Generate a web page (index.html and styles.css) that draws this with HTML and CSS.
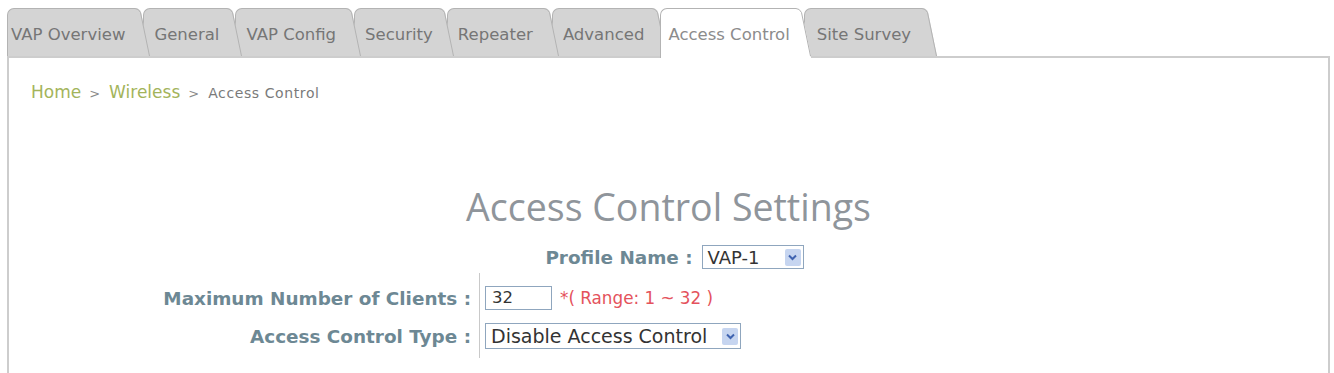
FILE: index.html
```html
<!DOCTYPE html>
<html lang="en">
<head>
<meta charset="utf-8">
<title>Access Control Settings</title>
<link rel="stylesheet" href="styles.css">
</head>
<body>
<div class="page">
  <nav class="tabs">
    <a class="tab tab-first"><span class="tab-label">VAP Overview</span><svg class="tab-slant" width="20" height="48" viewBox="0 0 20 48"><path class="slant-fill" d="M0 0 H5 Q9 0 11 4 L20 48 H0 Z"/><path class="slant-line" d="M0 0.5 H5 Q8.5 0.5 10.5 4.5 L19.5 48"/></svg></a>
    <a class="tab"><span class="tab-label">General</span><svg class="tab-slant" width="20" height="48" viewBox="0 0 20 48"><path class="slant-fill" d="M0 0 H5 Q9 0 11 4 L20 48 H0 Z"/><path class="slant-line" d="M0 0.5 H5 Q8.5 0.5 10.5 4.5 L19.5 48"/></svg></a>
    <a class="tab"><span class="tab-label">VAP Config</span><svg class="tab-slant" width="20" height="48" viewBox="0 0 20 48"><path class="slant-fill" d="M0 0 H5 Q9 0 11 4 L20 48 H0 Z"/><path class="slant-line" d="M0 0.5 H5 Q8.5 0.5 10.5 4.5 L19.5 48"/></svg></a>
    <a class="tab"><span class="tab-label">Security</span><svg class="tab-slant" width="20" height="48" viewBox="0 0 20 48"><path class="slant-fill" d="M0 0 H5 Q9 0 11 4 L20 48 H0 Z"/><path class="slant-line" d="M0 0.5 H5 Q8.5 0.5 10.5 4.5 L19.5 48"/></svg></a>
    <a class="tab"><span class="tab-label">Repeater</span><svg class="tab-slant" width="20" height="48" viewBox="0 0 20 48"><path class="slant-fill" d="M0 0 H5 Q9 0 11 4 L20 48 H0 Z"/><path class="slant-line" d="M0 0.5 H5 Q8.5 0.5 10.5 4.5 L19.5 48"/></svg></a>
    <a class="tab"><span class="tab-label">Advanced</span><svg class="tab-slant" width="20" height="48" viewBox="0 0 20 48"><path class="slant-fill" d="M0 0 H5 Q9 0 11 4 L20 48 H0 Z"/><path class="slant-line" d="M0 0.5 H5 Q8.5 0.5 10.5 4.5 L19.5 48"/></svg></a>
    <a class="tab tab-active"><span class="tab-label">Access Control</span><svg class="tab-slant" width="20" height="50" viewBox="0 0 20 50"><path class="slant-fill" d="M0 0 H5 Q9 0 11 4 L20 48 V50 H0 Z"/><path class="slant-line" d="M0 0.5 H5 Q8.5 0.5 10.5 4.5 L19.5 48 H20"/></svg></a>
    <a class="tab"><span class="tab-label">Site Survey</span><svg class="tab-slant" width="20" height="48" viewBox="0 0 20 48"><path class="slant-fill" d="M0 0 H5 Q9 0 11 4 L20 48 H0 Z"/><path class="slant-line" d="M0 0.5 H5 Q8.5 0.5 10.5 4.5 L19.5 48"/></svg></a>
  </nav>
  <main class="panel">
    <div class="breadcrumb">
      <a class="crumb-link">Home</a><span class="crumb-sep">&gt;</span><a class="crumb-link">Wireless</a><span class="crumb-sep">&gt;</span><span class="crumb-current">Access Control</span>
    </div>
    <h1 class="title">Access Control Settings</h1>
    <div class="profile-row">
      <span class="field-label">Profile Name :</span>
      <span class="select select-profile"><span class="select-value">VAP-1</span><span class="select-arrow"><svg width="9" height="7" viewBox="0 0 9 7"><path d="M1 1.5 L4.5 5 L8 1.5" fill="none" stroke="#3f63b0" stroke-width="2"/></svg></span></span>
    </div>
    <div class="form-grid">
      <div class="cell-label row-first"><span class="field-label">Maximum Number of Clients :</span></div>
      <div class="cell-field row-first">
        <span class="text-input">32</span>
        <span class="hint">*( Range: 1 ~ 32 )</span>
      </div>
      <div class="cell-label row-second"><span class="field-label">Access Control Type :</span></div>
      <div class="cell-field row-second">
        <span class="select select-type"><span class="select-value">Disable Access Control</span><span class="select-arrow"><svg width="9" height="7" viewBox="0 0 9 7"><path d="M1 1.5 L4.5 5 L8 1.5" fill="none" stroke="#3f63b0" stroke-width="2"/></svg></span></span>
      </div>
    </div>
  </main>
</div>
</body>
</html>
```

FILE: styles.css
```css
html, body {
  margin: 0;
  padding: 0;
  background: #ffffff;
}

.page {
  padding: 8px 4px 0 7px;
  font-family: "DejaVu Sans", Verdana, sans-serif;
}

/* ---------- tabs ---------- */
.tabs {
  display: flex;
  align-items: flex-start;
  height: 50px;
  margin-bottom: -2px;
  position: relative;
  z-index: 2;
}

.tab {
  display: flex;
  position: relative;
  margin-right: -7px;
  height: 48px;
  cursor: pointer;
}

.tab:nth-child(1) { z-index: 9; }
.tab:nth-child(2) { z-index: 8; }
.tab:nth-child(3) { z-index: 7; }
.tab:nth-child(4) { z-index: 6; }
.tab:nth-child(5) { z-index: 5; }
.tab:nth-child(6) { z-index: 4; }
.tab:nth-child(7) { z-index: 3; }
.tab:nth-child(8) { z-index: 2; }

.tab-label {
  display: block;
  height: 47px;
  line-height: 51px;
  padding: 0 3px 0 10px;
  background: #d4d4d4;
  border-top: 1px solid #b3b3b3;
  border-left: 1px solid #b3b3b3;
  border-top-left-radius: 7px;
  font-size: 16.5px;
  color: #767676;
  white-space: nowrap;
}

.tab:nth-child(1) .tab-label { padding-left: 3px; padding-right: 5px; }
.tab:nth-child(2) .tab-label { padding-right: 3px; }
.tab:nth-child(3) .tab-label { padding-right: 5px; }
.tab:nth-child(4) .tab-label { padding-right: 1px; }
.tab:nth-child(5) .tab-label { padding-right: 6px; }
.tab:nth-child(6) .tab-label { padding-right: 3px; }
.tab:nth-child(7) .tab-label { padding-left: 7px; padding-right: 1px; }
.tab:nth-child(8) .tab-label { padding-left: 12px; padding-right: 6px; }

.tab-slant {
  display: block;
  flex: none;
}

.slant-fill { fill: #d4d4d4; }
.slant-line { fill: none; stroke: #b3b3b3; stroke-width: 1; }

.tab.tab-active {
  z-index: 10;
  height: 50px;
}

.tab-active .tab-label {
  height: 49px;
  background: #ffffff;
  color: #8c8c8c;
}

.tab-active .slant-fill { fill: #ffffff; }

/* ---------- panel ---------- */
.panel {
  display: block;
  border: 2px solid #cdcdcd;
  border-bottom: none;
  min-height: 320px;
  position: relative;
  z-index: 1;
}

.breadcrumb {
  padding: 24px 0 0 22px;
  display: flex;
  align-items: baseline;
  white-space: nowrap;
}

.crumb-link {
  font-size: 17px;
  color: #a3b45b;
}

.crumb-sep {
  font-size: 13px;
  color: #8a8a8a;
  margin: 0 9px 0 8px;
}

.crumb-current {
  font-size: 14px;
  letter-spacing: 0.6px;
  color: #7a7a7a;
}

.title {
  margin: 83px 0 0;
  text-align: center;
  font-family: "Open Sans", "Noto Sans", sans-serif;
  font-weight: 400;
  font-size: 37.5px;
  line-height: 44px;
  color: #8f959b;
}

.field-label {
  font-weight: bold;
  font-size: 18.4px;
  color: #6d8894;
  white-space: nowrap;
}

.profile-row {
  display: flex;
  justify-content: center;
  align-items: center;
  gap: 9px;
  margin-top: 16px;
  padding-left: 12px;
}

/* select look-alike */
.select {
  display: inline-flex;
  align-items: center;
  box-sizing: border-box;
  border: 1px solid #8fa6be;
  background: #ffffff;
  padding: 0 2px 0 5px;
}

.select-value {
  flex: 1;
  font-size: 18px;
  color: #333333;
  white-space: nowrap;
}

.select-arrow {
  display: flex;
  align-items: center;
  justify-content: center;
  width: 16px;
  height: 17px;
  background: #c6d5f0;
  border-radius: 2px;
}

.select-profile {
  width: 102px;
  height: 24px;
}

.select-type {
  width: 256px;
  height: 26px;
}

.select-type .select-value {
  font-size: 19px;
}

/* form grid */
.form-grid {
  display: grid;
  grid-template-columns: 470px auto;
  margin-top: 4px;
}

.cell-label {
  display: flex;
  justify-content: flex-end;
  align-items: center;
  padding-right: 8px;
}

.cell-field {
  display: flex;
  align-items: center;
  gap: 8px;
  border-left: 1px solid #c9c9c9;
  padding-left: 5px;
}

.row-first {
  padding-top: 13px;
  padding-bottom: 6px;
}

.row-second {
  padding-top: 7px;
  padding-bottom: 9px;
}

.text-input {
  display: inline-block;
  box-sizing: border-box;
  width: 67px;
  height: 24px;
  line-height: 22px;
  border: 1px solid #8fa6be;
  padding-left: 6px;
  font-size: 16.5px;
  color: #333333;
}

.hint {
  font-size: 16.8px;
  color: #e4525c;
  white-space: nowrap;
}
```
